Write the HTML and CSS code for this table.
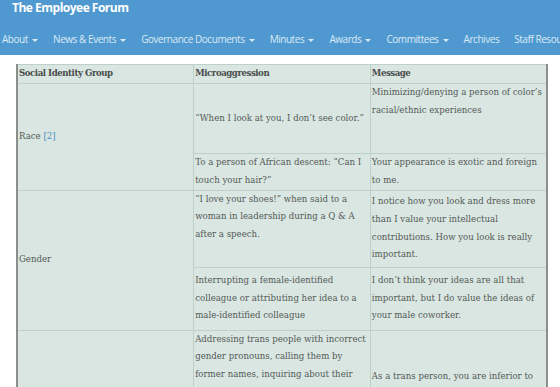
FILE: index.html
```
<!DOCTYPE html>
<html>
<head>
    <title>The Employee Forum</title>
    <link rel="stylesheet" href="styles.css">
</head>
<body>
    <header class="site-header">
        <div class="site-title">The Employee Forum</div>
        <nav class="main-nav">
            <a href="#" class="nav-item">About <span class="caret"></span></a>
            <a href="#" class="nav-item">News &amp; Events <span class="caret"></span></a>
            <a href="#" class="nav-item">Governance Documents <span class="caret"></span></a>
            <a href="#" class="nav-item">Minutes <span class="caret"></span></a>
            <a href="#" class="nav-item">Awards <span class="caret"></span></a>
            <a href="#" class="nav-item">Committees <span class="caret"></span></a>
            <a href="#" class="nav-item">Archives</a>
            <a href="#" class="nav-item">Staff Resources <span class="caret"></span></a>
        </nav>
    </header>

    <div class="content">
        <table class="micro-table">
            <thead>
                <tr>
                    <th>Social Identity Group</th>
                    <th>Microaggression</th>
                    <th>Message</th>
                </tr>
            </thead>
            <tbody>
                <tr class="row-tall">
                    <td rowspan="2">Race <a href="#" class="ref">[2]</a></td>
                    <td>&ldquo;When I look at you, I don&rsquo;t see color.&rdquo;</td>
                    <td class="top">Minimizing/denying a person of color&rsquo;s racial/ethnic experiences</td>
                </tr>
                <tr class="row-short">
                    <td>To a person of African descent: &ldquo;Can I touch your hair?&rdquo;</td>
                    <td>Your appearance is exotic and foreign to me.</td>
                </tr>
                <tr class="row-gender">
                    <td rowspan="2">Gender</td>
                    <td class="top">&ldquo;I love your shoes!&rdquo; when said to a woman in leadership during a Q &amp; A after a speech.</td>
                    <td>I notice how you look and dress more than I value your intellectual contributions. How you look is really important.</td>
                </tr>
                <tr class="row-pad">
                    <td>Interrupting a female-identified colleague or attributing her idea to a male-identified colleague</td>
                    <td>I don&rsquo;t think your ideas are all that important, but I do value the ideas of your male coworker.</td>
                </tr>
                <tr class="row-trans">
                    <td></td>
                    <td class="top">Addressing trans people with incorrect gender pronouns, calling them by former names, inquiring about their surgical status, or treating them as curiosities</td>
                    <td>As a trans person, you are inferior to others and not worthy of respect.</td>
                </tr>
            </tbody>
        </table>
    </div>
</body>
</html>
```

FILE: styles.css
```
body {
    margin: 0;
    font-family: "Open Sans", Arial, sans-serif;
    background: #fff;
    overflow: hidden;
}

.site-header {
    background-color: #4f99d0;
    height: 55px;
}

.site-title {
    color: #fff;
    font-weight: bold;
    font-size: 12px;
    letter-spacing: -0.5px;
    padding: 0 12px;
    height: 22px;
    line-height: 16px;
}

.main-nav {
    display: flex;
    white-space: nowrap;
    height: 34px;
    align-items: center;
    margin-left: -5.5px;
}

.nav-item {
    color: #dbe9f5;
    text-decoration: none;
    font-size: 10px;
    letter-spacing: -0.45px;
    padding: 0 7.5px;
}

.caret {
    display: inline-block;
    width: 0;
    height: 0;
    border-left: 3px solid transparent;
    border-right: 3px solid transparent;
    border-top: 3px solid #dbe9f5;
    vertical-align: middle;
    margin-left: 2px;
}

.content {
    padding: 9px 12px 0 16px;
}

.micro-table {
    width: 532px;
    table-layout: fixed;
    border-collapse: collapse;
    background-color: #d9e6e1;
    border-left: 2px solid #8a8f8d;
    border-right: 2px solid #8a8f8d;
    border-top: 1px solid #9aa19e;
    font-family: "DejaVu Serif", "Liberation Serif", serif;
    font-size: 8.6px;
    line-height: 17.8px;
    color: #565a58;
}

.micro-table th,
.micro-table td {
    border: 1px solid #bfcfc9;
    padding: 0 1px;
    text-align: left;
    vertical-align: middle;
}

.micro-table th {
    font-weight: bold;
    letter-spacing: -0.45px;
    height: 18px;
    color: #4a4d4c;
}

.micro-table td.top {
    vertical-align: top;
}

.row-tall td {
    height: 69px;
}

.row-short td {
    height: 34px;
}

.row-gender td {
    height: 76px;
}

.row-pad td {
    height: 62px;
}

.row-trans td {
    height: 110px;
}

.ref {
    color: #4a90c2;
    text-decoration: none;
}
```
